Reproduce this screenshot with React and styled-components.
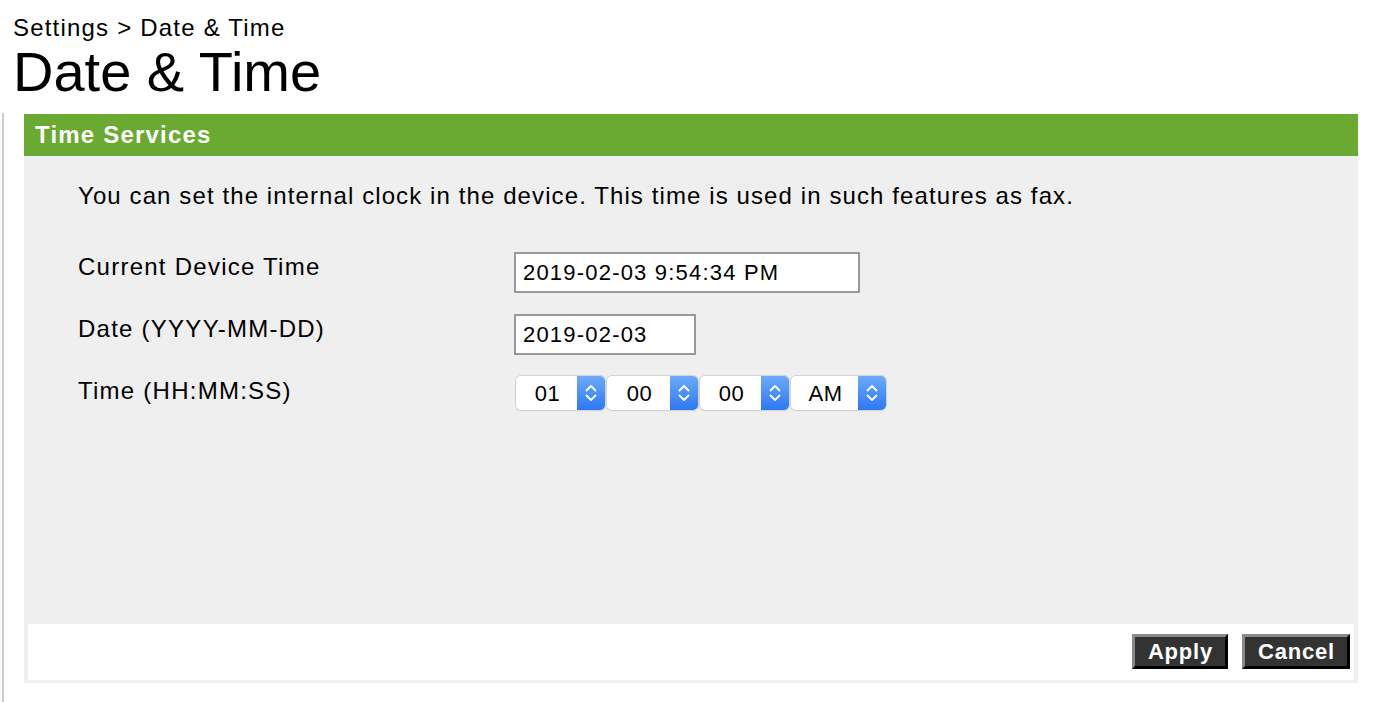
import React, { useState } from "react";
import { styled, createGlobalStyle } from "styled-components";

const GlobalStyle = createGlobalStyle`
  html, body {
    margin: 0;
    padding: 0;
    background: #ffffff;
    font-family: "Liberation Sans", Arial, Helvetica, sans-serif;
    color: #000000;
  }
`;

const HOURS = Array.from({ length: 12 }, (_, i) => String(i + 1).padStart(2, "0"));
const SIXTY = Array.from({ length: 60 }, (_, i) => String(i).padStart(2, "0"));

const ChevronIcon = () => (
  <svg width="14" height="22" viewBox="0 0 14 22" fill="none">
    <path
      d="M2.5 8.5 L7 4 L11.5 8.5 M2.5 13.5 L7 18 L11.5 13.5"
      stroke="#ffffff"
      strokeWidth="1.8"
      strokeLinecap="round"
      strokeLinejoin="round"
    />
  </svg>
);

const Select = ({ value, options, width, onChange }) => (
  <SelectBox $width={width}>
    <SelectValue>{value}</SelectValue>
    <SelectArrow>
      <ChevronIcon />
    </SelectArrow>
    <NativeSelect value={value} onChange={(e) => onChange(e.target.value)}>
      {options.map((o) => (
        <option key={o} value={o}>
          {o}
        </option>
      ))}
    </NativeSelect>
  </SelectBox>
);

const App = () => {
  const [hour, setHour] = useState("01");
  const [minute, setMinute] = useState("00");
  const [second, setSecond] = useState("00");
  const [ampm, setAmpm] = useState("AM");

  return (
    <>
      <GlobalStyle />
      <Page>
        <Breadcrumb>Settings &gt; Date &amp; Time</Breadcrumb>
        <Title>Date &amp; Time</Title>
        <Content>
          <Panel>
            <PanelHeader>Time Services</PanelHeader>
            <PanelBody>
              <Intro>
                You can set the internal clock in the device. This time is used in such
                features as fax.
              </Intro>
              <Form>
                <Label>Current Device Time</Label>
                <Field>
                  <TextInput $width={346} defaultValue="2019-02-03 9:54:34 PM" />
                </Field>
                <Label>Date (YYYY-MM-DD)</Label>
                <Field>
                  <TextInput $width={182} defaultValue="2019-02-03" />
                </Field>
                <Label>Time (HH:MM:SS)</Label>
                <Field>
                  <SelectGroup>
                    <Select value={hour} options={HOURS} width={89} onChange={setHour} />
                    <Select value={minute} options={SIXTY} width={91} onChange={setMinute} />
                    <Select value={second} options={SIXTY} width={89} onChange={setSecond} />
                    <Select value={ampm} options={["AM", "PM"]} width={95} onChange={setAmpm} />
                  </SelectGroup>
                </Field>
              </Form>
            </PanelBody>
            <FooterFrame>
              <Footer>
                <Button>Apply</Button>
                <Button>Cancel</Button>
              </Footer>
            </FooterFrame>
          </Panel>
        </Content>
      </Page>
    </>
  );
};

export default App;

const Page = styled.div`
  display: flex;
  flex-direction: column;
  width: 1382px;
  height: 702px;
  overflow: hidden;
`;

const Breadcrumb = styled.div`
  padding: 14px 0 0 13px;
  font-size: 24px;
  letter-spacing: 1.2px;
  line-height: 27px;
`;

const Title = styled.h1`
  margin: 0;
  padding-left: 13px;
  font-size: 56px;
  font-weight: 400;
  line-height: 62px;
  height: 72px;
`;

const Content = styled.div`
  display: flex;
  margin-left: 2px;
  padding: 0 24px 19px 20px;
  border-left: 2px solid #cccccc;
  flex: 1;
`;

const Panel = styled.div`
  display: flex;
  flex-direction: column;
  flex: 1;
  margin-top: 1px;
  background: #efefef;
`;

const PanelHeader = styled.div`
  height: 42px;
  padding-left: 11px;
  background: #6aa932;
  color: #ffffff;
  font-size: 24px;
  font-weight: 700;
  letter-spacing: 1.2px;
  line-height: 42px;
`;

const PanelBody = styled.div`
  flex: 1;
  padding: 26px 54px 0;
`;

const Intro = styled.p`
  margin: 0 0 42px;
  font-size: 24px;
  letter-spacing: 1.1px;
  line-height: 28px;
`;

const Form = styled.div`
  display: grid;
  grid-template-columns: 436px auto;
  row-gap: 21px;
  align-items: start;
`;

const Label = styled.div`
  font-size: 24px;
  letter-spacing: 1.25px;
  line-height: 28px;
  padding-top: 1px;
`;

const Field = styled.div`
  display: flex;
`;

const TextInput = styled.input`
  box-sizing: border-box;
  width: ${({ $width }) => $width}px;
  height: 41px;
  margin: 0;
  padding: 1px 7px 0;
  border: 2px solid #999999;
  background: #ffffff;
  font-family: "Liberation Sans", Arial, sans-serif;
  font-size: 22px;
  letter-spacing: 1.2px;
  color: #000000;
  outline: none;
`;

const SelectGroup = styled.div`
  display: flex;
  gap: 2px;
  padding-left: 2px;
`;

const SelectBox = styled.div`
  position: relative;
  box-sizing: border-box;
  display: flex;
  width: ${({ $width }) => $width}px;
  height: 34px;
  border-radius: 5px;
  background: #ffffff;
  box-shadow: 0 0 0 1px #d3d3d3, 0 1px 1px rgba(0, 0, 0, 0.15);
  overflow: hidden;
`;

const SelectValue = styled.div`
  flex: 1;
  text-align: center;
  font-size: 22px;
  letter-spacing: 0.6px;
  line-height: 36px;
  padding-left: 2px;
`;

const SelectArrow = styled.div`
  display: flex;
  align-items: center;
  justify-content: center;
  width: 28px;
  background: linear-gradient(#6eaafb, #2c78f5);
`;

const NativeSelect = styled.select`
  position: absolute;
  inset: 0;
  opacity: 0;
  cursor: pointer;
`;

const FooterFrame = styled.div`
  padding: 0 4px 3px;
`;

const Footer = styled.div`
  display: flex;
  justify-content: flex-end;
  gap: 14px;
  height: 56px;
  padding: 10px 4px 0 0;
  box-sizing: border-box;
  background: #ffffff;
`;

const Button = styled.button`
  box-sizing: border-box;
  height: 35px;
  padding: 0 12px 0 13px;
  border: 3px solid;
  border-color: #8a8a8a #000000 #000000 #8a8a8a;
  background: #333333;
  color: #ffffff;
  font-family: "Liberation Sans", Arial, sans-serif;
  font-size: 22px;
  font-weight: 700;
  letter-spacing: 0.8px;
  line-height: 28px;
  cursor: pointer;
`;
